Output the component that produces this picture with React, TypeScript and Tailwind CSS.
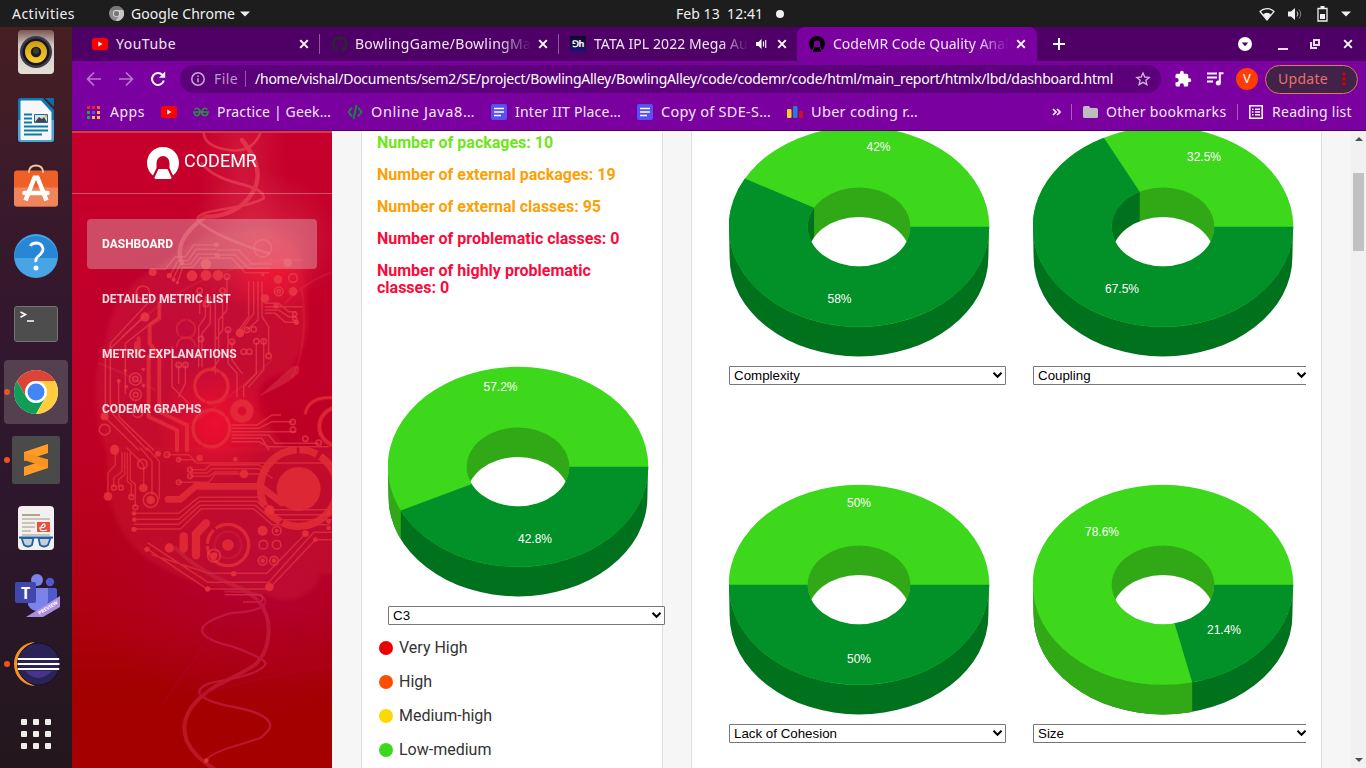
import type { ReactNode } from 'react';

type Slice = { text: string; x: number; y: number };

const LIGHT = '#3dd71c';
const LIGHT_SIDE = '#31a816';
const DARK = '#029028';
const DARK_SIDE = '#00711d';

/* ---------- 3D donut chart ---------- */

function Donut({ id, share, labels }: { id: string; share: number; labels: Slice[] }) {
  const cx = 130;
  const cy = 100.8;
  const a = share * 2 * Math.PI;
  const ox = cx + 130.3 * Math.cos(a);
  const oy = cy + 100 * Math.sin(a);
  const ix = cx + 51.3 * Math.cos(a);
  const iy = cy + 39.4 * Math.sin(a);
  const big = share > 0.5 ? 1 : 0;
  const front = share < 0.5;
  return (
    <svg width="262" height="232" viewBox="0 0 262 232" className="block shrink-0">
      <defs>
        <clipPath id={id + 'in'}>
          <ellipse cx={cx} cy={cy} rx="51.3" ry="39.4" />
        </clipPath>
        <clipPath id={id + 'side'}>
          <rect x="-1" y="90" width={ox + 1} height="142" />
        </clipPath>
      </defs>
      <path d="M0 100.8 L0.6 131.2 A129.4 99.2 0 0 0 259.4 131.2 L260 100.8Z" fill={DARK_SIDE} />
      {front && (
        <path
          d="M0 100.8 L0.6 131.2 A129.4 99.2 0 0 0 259.4 131.2 L260 100.8Z"
          fill={LIGHT_SIDE}
          clipPath={`url(#${id}side)`}
        />
      )}
      <ellipse cx={cx} cy={cy} rx="130.3" ry="100" fill={LIGHT} />
      <path
        d={`M${cx + 130.3} ${cy} A130.3 100 0 ${big} 1 ${ox} ${oy} L${ix} ${iy} A51.3 39.4 0 ${big} 0 ${cx + 51.3} ${cy}Z`}
        fill={DARK}
      />
      <g clipPath={`url(#${id}in)`}>
        <rect x="70" y="50" width="120" height="100" fill={LIGHT_SIDE} />
        {!front && share > 0.5 && <rect x="70" y="50" width={ix - 70} height="100" fill={DARK_SIDE} />}
        <ellipse cx={cx} cy={cy + 29.5} rx="51.3" ry="39.4" fill="#fff" />
      </g>
      {labels.map((l) => (
        <text
          key={l.text + l.y}
          x={l.x}
          y={l.y}
          textAnchor="middle"
          fill="#fff"
          fontSize="12"
          fontFamily="'Liberation Sans', Arial, sans-serif"
        >
          {l.text}
        </text>
      ))}
    </svg>
  );
}

function Select({ label }: { label: string }) {
  return (
    <div className="flex h-[19px] w-[277px] shrink-0 items-center justify-between rounded-[1px] border border-[#767676] bg-white pr-[2px] pl-1 font-['Liberation_Sans',Arial,sans-serif] text-[13.333px] leading-[17px] text-black">
      <span>{label}</span>
      <svg width="11" height="8" viewBox="0 0 11 8" fill="none" stroke="#000" strokeWidth="2" className="-mt-px">
        <path d="M1.500 1.800l4 4 4-4" />
      </svg>
    </div>
  );
}

function Chart({ id, share, label, labels }: { id: string; share: number; label: string; labels: Slice[] }) {
  return (
    <div className="flex h-[358px] w-[304px] shrink-0 flex-col">
      <Donut id={id} share={share} labels={labels} />
      <div className="h-[8px]" />
      <Select label={label} />
    </div>
  );
}

/* ---------- Desktop top bar ---------- */

function TopBar() {
  return (
    <header className="flex h-[27px] shrink-0 items-center bg-[#1d1d1d] text-[14px] whitespace-pre text-[#f0f0f0]">
      <span className="ml-3 w-[97px] tracking-[0.47px]">Activities</span>
      <svg width="15" height="15" viewBox="0 0 16 16">
        <circle cx="8" cy="8" r="8" fill="#8b8b8b" />
        <path d="M8 4h7a8 8 0 0 1-8 12l4-6z" fill="#c4c4c4" />
        <path d="M1 4a8 8 0 0 1 14 0H8z" fill="#777" />
        <circle cx="8" cy="8" r="3.8" fill="#ddd" />
        <circle cx="8" cy="8" r="2.8" fill="#777" />
      </svg>
      <span className="ml-[7px] w-[109px] tracking-[0.05px]">Google Chrome</span>
      <svg width="10" height="6" viewBox="0 0 10 6" fill="#f0f0f0"><path d="M0 0.5h10L5 5.5z" /></svg>
      <span className="ml-[426px] w-[100px] tracking-[0.05px]">Feb 13  12:41</span>
      <i className="h-2 w-2 rounded-full bg-[#f0f0f0]" />
      <svg className="ml-[475px]" width="16" height="14" viewBox="0 0 16 14">
        <path d="M1 4.5a10 10 0 0 1 14 0L8 13z" fill="none" stroke="#f0f0f0" strokeWidth="1.2" strokeLinejoin="round" />
        <path d="M4 7.2a6 6 0 0 1 8 0L8 13z" fill="#f0f0f0" />
      </svg>
      <svg className="ml-[13px]" width="16" height="14" viewBox="0 0 16 14">
        <path d="M0 4.5h3L7 1v12L3 9.5H0z" fill="#f0f0f0" />
        <path d="M9 4.500Q10.800 7 9 9.500" fill="none" stroke="#d0d0d0" />
        <path d="M11 2.500Q14.500 7 11 11.500" fill="none" stroke="#808080" />
      </svg>
      <svg className="ml-[13px]" width="11" height="16" viewBox="0 0 11 16">
        <path d="M1 2.500h9v12.500H1z" fill="none" stroke="#f0f0f0" strokeWidth="1.300" />
        <path d="M3.500 0h4v2h-4zM3 8h5v5H3z" fill="#f0f0f0" />
      </svg>
      <svg className="ml-[13px]" width="10" height="6" viewBox="0 0 10 6" fill="#f0f0f0"><path d="M0 0.500h10L5 5.500z" /></svg>
    </header>
  );
}

/* ---------- Dock ---------- */

function DockItem({ children, dot, active }: { children: ReactNode; dot?: boolean; active?: boolean }) {
  return (
    <div className="relative flex h-[68px] w-[72px] shrink-0 items-center justify-center">
      {active && <i className="absolute inset-x-1 inset-y-[2px] rounded-[4px] bg-[#54404f]" />}
      {dot && <i className="absolute top-1/2 left-1 h-[6px] w-[6px] -translate-y-1/2 rounded-full bg-[#e95420]" />}
      <svg width="48" height="48" viewBox="0 0 48 48" className="relative">{children}</svg>
    </div>
  );
}

function Dock() {
  return (
    <nav className="flex w-[72px] shrink-0 flex-col overflow-hidden bg-[linear-gradient(180deg,#471f22_0%,#3b1a2a_20%,#32172e_42%,#2c172b_70%,#23171c_100%)]">
      <svg width="72" height="59" viewBox="0 0 72 59" className="shrink-0">
        <defs>
          <linearGradient id="spk" x1="0" y1="0" x2="0" y2="1"><stop offset="0" stopColor="#7a5656" /><stop offset=".35" stopColor="#d2cac2" /><stop offset="1" stopColor="#e4e0d6" /></linearGradient>
          <linearGradient id="cone" x1="0" y1="0" x2="0" y2="1"><stop offset="0" stopColor="#d09c10" /><stop offset="1" stopColor="#fbd030" /></linearGradient>
        </defs>
        <rect x="18" y="3" width="36" height="44" rx="4" fill="url(#spk)" />
        <circle cx="36" cy="25" r="16" fill="#3c3a48" />
        <circle cx="36" cy="25" r="13.500" fill="#17151f" />
        <circle cx="36" cy="25" r="11" fill="url(#cone)" />
        <circle cx="36" cy="25" r="5.200" fill="#1b1b1b" />
        <circle cx="36" cy="24" r="3" fill="#3b3b3b" />
      </svg>
      <DockItem>
        <path d="M9 2h22l11 12v29a3 3 0 0 1-3 3H9a3 3 0 0 1-3-3V5a3 3 0 0 1 3-3z" fill="#0e7ab4" />
        <path d="M6 24h36v19a3 3 0 0 1-3 3H9a3 3 0 0 1-3-3z" fill="#4ba5d6" />
        <path d="M9.500 4.500H29L39.500 16v27a1 1 0 0 1-1 1h-29a1 1 0 0 1-1-1v-37a1 1 0 0 1 1-1.500z" fill="#f7f7f7" />
        <path d="M33 2h8q1 0 1 1v8z" fill="#0e6ca0" />
        <path d="M12 18.500h8M12 22.500h8M12 26.500h8M12 30.500h24M12 34.500h24M12 38.500h18" stroke="#0e7ab4" strokeWidth="1.800" />
        <path d="M22.500 18.500h13v8h-13z" fill="#cfe4ef" stroke="#246a90" strokeWidth="1" />
        <path d="M23 26l4-5 3 2 2-2 3 5z" fill="#444" />
        <circle cx="34" cy="20" r="1.200" fill="#f5b81a" />
      </DockItem>
      <DockItem>
        <g transform="translate(0 -1.500)">
          <path d="M2 11a3 3 0 0 1 3-3h38a3 3 0 0 1 3 3v30a3 3 0 0 1-3 3H5a3 3 0 0 1-3-3z" fill="#ee6028" />
          <path d="M2 25h44v16a3 3 0 0 1-3 3H5a3 3 0 0 1-3-3z" fill="#f0845a" />
          <path d="M17 10.500v-2q1-5.500 7-5.500t7 5.500v2" fill="none" stroke="#f2c89b" strokeWidth="1.800" />
          <path d="M22.500 15L13.500 38M25.500 15l9 23" stroke="#fff" strokeWidth="4.500" fill="none" />
          <path d="M21 13h6l1 4h-8z" fill="#fff" />
          <path d="M12.500 30.500h23" stroke="#fff" strokeWidth="4.500" strokeLinecap="round" />
        </g>
      </DockItem>
      <DockItem>
        <circle cx="24" cy="24" r="22" fill="#47a5e6" />
        <path d="M2 26a22 22 0 0 1 44 0z" fill="#2787d6" />
        <path d="M18.500 14q1-3 6-3t6.500 5.500q0 4-4 7T24 30" fill="none" stroke="#fff" strokeWidth="2.800" />
        <circle cx="24" cy="36" r="2.500" fill="#fff" />
      </DockItem>
      <DockItem>
        <rect x="2.500" y="6.500" width="43" height="35" rx="2.500" fill="#4d4d4d" stroke="#747474" />
        <path d="M8.500 12l5 2.500-5 2.800M15 21h7" fill="none" stroke="#fff" strokeWidth="1.600" />
      </DockItem>
      <DockItem dot active>
        <circle cx="24" cy="24" r="22" fill="#fff" />
        <path d="M4.950 13A22 22 0 0 1 43.050 13H24a11 11 0 0 0-9.530 16.500z" fill="#dc4437" />
        <path d="M4.950 13A22 22 0 0 0 24 46l9.530-16.500a11 11 0 0 1-19.060 0z" fill="#0f9d58" />
        <path d="M43.050 13A22 22 0 0 1 24 46l9.530-16.500A11 11 0 0 0 33.500 18.500 11 11 0 0 0 24 13z" fill="#ffcd40" />
        <circle cx="24" cy="24" r="10.500" fill="#fff" />
        <circle cx="24" cy="24" r="8.500" fill="#4285f4" />
      </DockItem>
      <DockItem dot>
        <rect x="0" y="0" width="48" height="48" rx="2" fill="#4a4a4a" />
        <path d="M12 16l24-8v9l-24 8z" fill="#ff9b26" />
        <path d="M12 31l24-8v9l-24 8z" fill="#ff9b26" />
        <path d="M12 16.500v7.500l24 8v-8.500z" fill="#f8931f" />
      </DockItem>
      <DockItem>
        <rect x="6" y="2" width="36" height="44" rx="4" fill="#f2f1ef" />
        <path d="M10 11h18" stroke="#b0a48f" strokeWidth="2" />
        <path d="M10 15h28M10 19h13M10 23h13M10 27h9M10 31h28" stroke="#c8c4b8" strokeWidth="1.800" />
        <rect x="25" y="18" width="13" height="10" fill="#e8503c" />
        <path d="M27 24q7 0 6-3t-4 2 6 3" fill="none" stroke="#fff" strokeWidth="1.200" />
        <g fill="#c9d1d8" stroke="#1c61a8" strokeWidth="1.800"><path d="M9.500 34h12l-1.500 7q-4 3-8 0zM26.500 34h12l-2.500 7q-4 3-8 0z" /><path d="M7 33.500h34" /></g>
      </DockItem>
      <DockItem>
        <g transform="translate(0 2)">
          <circle cx="25" cy="6" r="6" fill="#7b83eb" />
          <circle cx="38" cy="8" r="4.200" fill="#5059c9" />
          <path d="M34 14h9a2 2 0 0 1 2 2v9a8 8 0 0 1-11 7z" fill="#5059c9" />
          <path d="M17 14h19v13a10.500 10.500 0 0 1-20 4z" fill="#7b83eb" />
          <rect x="3" y="8" width="21" height="21" rx="2" fill="#4047ad" />
          <text x="13.500" y="25" textAnchor="middle" fill="#fff" fontSize="16" fontWeight="700" fontFamily="'Noto Sans',sans-serif">T</text>
          <path d="M14 43L48 22v11L31 43z" fill="#ad8ddf" />
          <text transform="translate(27.500 41) rotate(-32)" fill="#fff" fontSize="5" fontWeight="700" fontFamily="'Noto Sans',sans-serif">PREVIEW</text>
        </g>
      </DockItem>
      <DockItem dot>
        <path d="M23 2A21 22 0 0 0 23 46 24 24 0 0 1 23 2z" fill="#f7941e" />
        <circle cx="26.500" cy="24" r="21" fill="#2b2255" stroke="#15102c" />
        <path d="M13 31q13 14 27 0z" fill="#48348c" />
        <path d="M5.800 19h41.400M5.500 24h42M5.800 29h41.400" stroke="#fff" strokeWidth="2.200" />
      </DockItem>
      <div className="grid h-[72px] shrink-0 grid-cols-[repeat(3,6px)] content-center justify-center gap-[6px]">
        {Array.from({ length: 9 }, (_, i) => <i key={i} className="h-[6px] w-[6px] rounded-[1px] bg-[#f0f0ea]" />)}
      </div>
    </nav>
  );
}

/* ---------- Browser chrome ---------- */

function Close() {
  return <svg width="10" height="10" viewBox="0 0 10 10" className="shrink-0" stroke="#fff" strokeWidth="1.900"><path d="M1.200 1.200l7.600 7.600M8.800 1.200L1.200 8.800" /></svg>;
}

function YouTube() {
  return <svg width="16" height="12" viewBox="0 0 16 12" className="shrink-0"><rect width="16" height="12" rx="2.500" fill="#f00" /><path d="M6.300 3.500v5l4.200-2.500z" fill="#fff" /></svg>;
}

function CodeMrMark({ size, fill }: { size: number; fill: string }) {
  return (
    <svg width={size} height={size} viewBox="0 0 32 32" fill={fill} className="shrink-0">
      <path d="M6 28.500A16 16 0 1 1 26 28.500L22.500 21V16a6.500 7 0 0 0-13 0v5z" />
      <path d="M11.500 22h9l4 8.500q0 1.500-1.500 1.500H9q-1.500 0-1.500-1.500z" />
    </svg>
  );
}

const tabTitle = '-mt-[2px] overflow-hidden whitespace-nowrap [mask-image:linear-gradient(90deg,#000_82%,transparent)]';

function TabStrip() {
  return (
    <div className="flex h-[34px] shrink-0 items-center bg-[#4f0066] text-[14px] text-[#f0e6f4]">
      <div className="flex w-[247px] items-center pl-5">
        <YouTube />
        <span className="-mt-[2px] ml-2 w-[183px] tracking-[0.49px]">YouTube</span>
        <Close />
      </div>
      <i className="h-5 w-px bg-[#8a5a9a]" />
      <div className="flex w-[238px] items-center pl-[12px]">
        <svg width="16" height="16" viewBox="0 0 16 16" fill="#2b2536" className="shrink-0"><path fillRule="evenodd" d="M8 0C3.600 0 0 3.600 0 8c0 3.500 2.300 6.500 5.500 7.600.4.100.5-.2.500-.4v-1.500c-2.200.5-2.700-.9-2.700-.9-.4-.9-.9-1.200-.9-1.200-.7-.5.100-.5.100-.5.800.1 1.200.8 1.200.8.7 1.200 1.900.9 2.300.7.100-.5.300-.9.500-1.100-1.800-.2-3.600-.9-3.600-4 0-.9.300-1.600.8-2.100-.1-.2-.4-1 .1-2.100 0 0 .7-.2 2.200.8.600-.2 1.300-.3 2-.3s1.400.1 2 .3c1.500-1 2.200-.8 2.200-.8.400 1.100.2 1.900.1 2.100.5.600.8 1.300.8 2.100 0 3.100-1.900 3.700-3.700 3.900.3.300.6.800.6 1.500v2.200c0 .2.100.5.600.4A8 8 0 0 0 16 8c0-4.400-3.600-8-8-8z" /></svg>
        <span className={'ml-[7px] w-[176px] tracking-[0.27px] ' + tabTitle}>BowlingGame/BowlingMain</span>
        <span className="ml-[7px]"><Close /></span>
      </div>
      <i className="h-5 w-px bg-[#8a5a9a]" />
      <div className="flex w-[238px] items-center pl-[11px]">
        <span className="flex h-4 w-4 items-center justify-center bg-[linear-gradient(#0b0b22,#20107a)] text-[9px] font-bold tracking-[-0.5px] text-white">ꓨh</span>
        <span className={'ml-2 w-[154px] tracking-[0.07px] ' + tabTitle}>TATA IPL 2022 Mega Auction</span>
        <svg className="ml-[8px] shrink-0" width="11" height="12" viewBox="0 0 11 12"><path d="M0 4h2.500L5.500 1v10L2.500 8H0z" fill="#fff" /><path d="M7.500 3.500v5M9.700 2v8" stroke="#fff" strokeWidth="1.100" /></svg>
        <span className="ml-[10px]"><Close /></span>
      </div>
      <div className="flex h-full w-[240px] items-center rounded-t-lg bg-[#7a00a0] pl-3">
        <CodeMrMark size={16} fill="#000" />
        <span className={'ml-2 w-[176px] tracking-[-0.01px] ' + tabTitle}>CodeMR Code Quality Analysis</span>
        <span className="ml-[7px]"><Close /></span>
      </div>
      <svg className="ml-[16px]" width="12" height="12" viewBox="0 0 12 12" stroke="#fff" strokeWidth="2"><path d="M6 0v12M0 6h12" /></svg>
      <svg className="ml-[173px]" width="14" height="14" viewBox="0 0 14 14"><circle cx="7" cy="7" r="7" fill="#fff" /><path d="M3.800 5.500h6.400L7 9.200z" fill="#4f0066" /></svg>
      <i className="mt-[9px] ml-[26px] h-[2px] w-[10px] bg-[#e8dcec]" />
      <svg className="ml-[22px]" width="10" height="10" viewBox="0 0 10 10" fill="none" stroke="#e8dcec" strokeWidth="2"><path d="M4 1h5v5H4zM1 3v6h6" /></svg>
      <span className="ml-[23px]"><Close /></span>
    </div>
  );
}

function Toolbar() {
  return (
    <div className="flex h-[36px] shrink-0 items-center bg-[#7a00a0] text-[14px] text-white">
      <svg className="ml-[14px] shrink-0" width="16" height="16" viewBox="0 0 16 16" fill="none" stroke="#b877cc" strokeWidth="1.700"><path d="M15 8H2M8 1.500L1.500 8 8 14.500" /></svg>
      <svg className="ml-4 shrink-0" width="16" height="16" viewBox="0 0 16 16" fill="none" stroke="#b877cc" strokeWidth="1.700"><path d="M1 8h13M8 1.500L14.500 8 8 14.500" /></svg>
      <svg className="ml-4 shrink-0" width="16" height="16" viewBox="0 0 16 16" fill="none" stroke="#fff" strokeWidth="2"><path d="M13.800 9.500A6 6 0 1 1 12.500 4" /><path d="M9 6.800h6.200V.6z" fill="#fff" stroke="none" /></svg>
      <div className="ml-[14px] flex h-7 w-[981px] shrink-0 items-center rounded-full bg-[#5b007a]">
        <svg className="ml-[11px] shrink-0" width="14" height="14" viewBox="0 0 14 14" fill="none" stroke="#c8a8d4" strokeWidth="1.500"><circle cx="7" cy="7" r="6.200" /><path d="M7 6.200v4M7 3.500v1.500" /></svg>
        <span className="-mt-px ml-[9px] w-[24px] tracking-[0.4px] text-[#b99ac6]">File</span>
        <i className="ml-[7px] h-4 w-px bg-[#9458a8]" />
        <span className="-mt-px ml-[9px] w-[878px] shrink-0 text-[14px] tracking-[-0.241px] whitespace-nowrap">/home/vishal/Documents/sem2/SE/project/BowlingAlley/BowlingAlley/code/codemr/code/html/main_report/htmlx/lbd/dashboard.html</span>
        <svg className="ml-[2px] shrink-0" width="16" height="16" viewBox="0 0 24 24" fill="none" stroke="#d0b4da" strokeWidth="2"><path d="M12 3l2.700 6 6.600.6-5 4.400 1.500 6.500-5.800-3.500-5.800 3.500 1.500-6.500-5-4.400 6.600-.6z" /></svg>
      </div>
      <svg className="ml-[13px] shrink-0" width="18" height="18" viewBox="0 0 24 24" fill="#fff"><path d="M20.500 11H19V7a2 2 0 0 0-2-2h-4V3.500a2.500 2.500 0 0 0-5 0V5H4a2 2 0 0 0-2 2v3.800h1.500a2.700 2.700 0 0 1 0 5.400H2V20a2 2 0 0 0 2 2h3.800v-1.500a2.700 2.700 0 0 1 5.400 0V22H17a2 2 0 0 0 2-2v-4h1.500a2.500 2.500 0 0 0 0-5z" /></svg>
      <svg className="ml-[14px] shrink-0" width="18" height="16" viewBox="0 0 18 16"><path d="M1 2.500h10M1 6.500h10M1 10.500h6M13.800 12V2.300h3.700" stroke="#fff" strokeWidth="2" fill="none" /><circle cx="12.300" cy="12" r="2.500" fill="#fff" /></svg>
      <span className="ml-[12px] flex h-[22px] w-[22px] shrink-0 items-center justify-center rounded-full bg-[#ff3d00] text-[13px]">V</span>
      <div className="ml-[7px] flex h-[29px] w-[93px] shrink-0 items-center rounded-full border border-[#d87a5c] bg-[#43224a] pl-[12px]">
        <span className="-mt-px w-[64px] tracking-[0.29px] text-[#e8716d]">Update</span>
        <svg width="4" height="14" viewBox="0 0 4 14" fill="#d80000"><path d="M.5.500h3v3h-3zM.5 5.500h3v3h-3zM.5 10.500h3v3h-3z" /></svg>
      </div>
    </div>
  );
}

function DocIcon() {
  return <svg width="16" height="16" viewBox="0 0 16 16" className="shrink-0"><rect width="16" height="16" rx="2" fill="#5650f5" /><path d="M3 4.500h10M3 8h10M3 11.500h7" stroke="#fff" strokeWidth="1.700" /></svg>;
}

function Bookmarks() {
  const colors = ['#e22', '#e22', '#f53', '#1a5', '#55f', '#fb3', '#1a5', '#fb3', '#fb3'];
  return (
    <div className="flex h-[34px] shrink-0 items-center border-b border-[#4f0066] bg-[#7a00a0] pb-[3px] text-[14px] whitespace-nowrap text-[#f3e8f7] [&>span]:-mt-px">
      <div className="ml-[15px] grid grid-cols-[repeat(3,3px)] gap-[2px]">
        {colors.map((c, i) => <i key={i} className="h-[3px] w-[3px]" style={{ background: c }} />)}
      </div>
      <span className="ml-[10px] w-[51px] tracking-[0.53px]">Apps</span>
      <YouTube />
      <svg className="ml-4 shrink-0" width="16" height="10" viewBox="0 0 16 10" fill="none" stroke="#2f8d46" strokeWidth="1.700"><path d="M1.500 2.500Q4 0 6.200 2.500T5 8.500Q1.500 9.500 1 5h14Q14.500 9.500 11 8.500T9.800 2.500Q12 0 14.500 2.500" /></svg>
      <span className="ml-2 w-[130px] tracking-[0.16px]">Practice | Geek…</span>
      <svg width="16" height="14" viewBox="0 0 16 14" className="shrink-0" fill="none" stroke="#0f8a3c" strokeWidth="2"><path d="M5 2.500L1.500 7 5 11.500M11 2.500L14.500 7 11 11.500M9.500 0l-3 14" /></svg>
      <span className="ml-2 w-[120px] text-[14.5px] tracking-[0.61px]">Online Java8…</span>
      <DocIcon />
      <span className="ml-2 w-[122px] tracking-[0.23px]">Inter IIT Place…</span>
      <DocIcon />
      <span className="ml-2 w-[126px] text-[14.5px] tracking-[0.29px]">Copy of SDE-S…</span>
      <svg width="16" height="14" viewBox="0 0 16 14" className="shrink-0"><rect y="4" width="4.500" height="9" rx="1" fill="#f5d327" /><rect x="6" y="1" width="4.500" height="12" rx="1" fill="#2a7bd4" /><rect x="12" y="6" width="4" height="7" rx="1" fill="#c4161c" /></svg>
      <span className="ml-2 w-[241px] text-[14.5px] tracking-[0.31px]">Uber coding r…</span>
      <svg width="9" height="8" viewBox="0 0 9 8" fill="none" stroke="#fff" strokeWidth="1.600"><path d="M1 1l3 3-3 3M5 1l3 3-3 3" /></svg>
      <i className="ml-[10px] h-4 w-px bg-[#a860bd]" />
      <svg className="ml-[11px] shrink-0" width="15" height="12" viewBox="0 0 15 12" fill="#bdbdbd"><path d="M0 1.500Q0 0 1.500 0H6l1.500 2h6Q15 2 15 3.500v7q0 1.500-1.500 1.500h-12Q0 12 0 10.500z" /></svg>
      <span className="ml-[8px] w-[131px] tracking-[0.3px]">Other bookmarks</span>
      <i className="h-4 w-px bg-[#a860bd]" />
      <svg className="ml-[11px] shrink-0" width="14" height="14" viewBox="0 0 14 14" fill="none" stroke="#fff" strokeWidth="1.500"><path d="M.8.8h12.400v12.400H.8z" /><path d="M3 4.200h1.500M6 4.200h5M3 7h1.500M6 7h5M3 9.800h1.500M6 9.800h5" /></svg>
      <span className="ml-[9px] tracking-[0.28px]">Reading list</span>
    </div>
  );
}

/* ---------- Report sidebar ---------- */

function SidebarArt() {
  return (
    <svg className="absolute inset-0" width="260" height="637" viewBox="0 0 260 637">
      <defs>
        <linearGradient id="base" x1="0" y1="0" x2="0" y2="1"><stop offset="0" stopColor="#c6002c" /><stop offset=".5" stopColor="#be0024" /><stop offset=".75" stopColor="#b00012" /><stop offset=".88" stopColor="#a30000" /><stop offset="1" stopColor="#a60000" /></linearGradient>
        <radialGradient id="glow"><stop offset="0" stopColor="#ff1030" stopOpacity=".7" /><stop offset="1" stopColor="#ff1030" stopOpacity="0" /></radialGradient>
        <radialGradient id="plum"><stop offset="0" stopColor="#b4003c" stopOpacity=".75" /><stop offset="1" stopColor="#b4003c" stopOpacity="0" /></radialGradient>
        <radialGradient id="haze"><stop offset="0" stopColor="#f05868" stopOpacity=".42" /><stop offset="1" stopColor="#f05868" stopOpacity="0" /></radialGradient>
        <filter id="soft" x="-20%" y="-20%" width="140%" height="140%"><feGaussianBlur stdDeviation="6" /></filter>
      </defs>
      <rect width="260" height="637" fill="url(#base)" />
      <ellipse cx="190" cy="440" rx="180" ry="150" fill="url(#plum)" />
      <ellipse cx="110" cy="210" rx="120" ry="110" fill="url(#plum)" />
      <ellipse cx="190" cy="110" rx="80" ry="70" fill="url(#haze)" />
      <ellipse cx="170" cy="30" rx="45" ry="100" fill="url(#haze)" opacity=".6" />
      <g transform="translate(0 -1) scale(.33333)" fill="none" stroke="#ee4a52" strokeLinecap="round">
        <g fill="#f0474f" stroke="none" opacity=".17">
          <path d="M240 420Q330 350 420 310L560 300Q660 300 690 410Q720 520 700 640L650 730Q540 740 560 840L640 960H100Q40 760 100 640Q110 500 240 420z" filter="url(#soft)" />
        </g>
        <circle cx="600" cy="410" r="140" fill="url(#glow)" stroke="none" />
        <circle cx="430" cy="880" r="180" fill="url(#glow)" stroke="none" />
        <g strokeWidth="10" opacity=".55" stroke="#f0505e">
          <path d="M395 10Q400 50 470 60T565 10" strokeWidth="8" />
          <path d="M510 30Q585 120 540 190T400 260Q300 330 330 400" strokeWidth="13" />
          <path d="M390 100Q420 140 500 160T575 205Q540 225 440 240T400 290Q460 330 590 370" strokeWidth="8" />
        </g>
        <path d="M800 420Q700 450 640 520M690 480Q710 650 660 740M80 700Q140 720 250 780M360 880Q480 800 600 690M150 620Q400 380 690 390" strokeWidth="7" opacity=".18" />
        <path d="M560 800L660 710Q690 700 680 730Q650 760 560 800z" fill="#e84a58" stroke="none" opacity=".35" />
        <g strokeWidth="4.500" opacity=".55">
          <path d="M432 345H365L340 380H310L280 418H240M432 358H372L348 392H318L293 438M432 372H378L355 403H325L302 448M432 384H385L362 412H332L316 458M437 360H500L540 402H600M437 375H490L530 415H595M437 385H480L520 428H590M465 440V540L440 570V690L420 720M400 500V560L380 590V710M415 500V580L390 610V710M430 500V730M383 490V550M452 490V600L430 630M530 455V560L500 600M545 455V550L505 605M558 455V570L525 600M570 455V560L590 590V670M580 520H620L650 545H670M580 530H690M580 540H620L650 560H670M580 550H610L640 577H670M553 640V730L515 770V800M575 630V720L530 770M468 600V700L495 730V800M480 635V690L510 730M320 705V760M340 705V760L320 800M300 650V770L350 820" />
          <path d="M216 560L100 670V860M245 500L115 640V840M262 520V560L160 640V790M140 750V860L245 960M97 860L200 960M120 850L225 960" />
          <path d="M480 885H555L600 855H625M480 895H560L600 875H660M480 905H670M480 915H590L610 940H740M480 925H570L590 960M480 935H560L590 950H770" />
        </g>
        <g stroke="#e5303c" opacity=".8">
          <path d="M262 520V565L233 585V640L262 680V845L345 885V960M230 680V860L315 900V960" strokeWidth="12" />
          <path d="M200 625V680M192 640V665" strokeWidth="12" />
          <circle cx="418" cy="768" r="50" strokeWidth="10" strokeDasharray="90 10 60 8" />
          <circle cx="418" cy="895" r="55" strokeWidth="10" strokeDasharray="110 10 60 8" />
          <circle cx="342" cy="597" r="28" strokeWidth="6" strokeDasharray="60 8" opacity=".7" />
          <path d="M314 650a28 28 0 0 1 56 0" strokeWidth="6" opacity=".7" />
          <circle cx="510" cy="843" r="24" strokeWidth="22" />
          <circle cx="800" cy="890" r="58" strokeWidth="12" />
          <path d="M700 850Q710 800 780 803" strokeWidth="9" />
        </g>
        <g strokeWidth="5" opacity=".6">
          {[[213, 488, 20], [190, 747, 18], [190, 747, 8], [191, 794, 17], [191, 794, 7], [197, 846, 16], [98, 899, 16], [572, 355, 26], [663, 444, 13], [620, 484, 13], [620, 484, 5], [465, 440, 8], [383, 482, 8], [402, 522, 8], [452, 482, 8], [668, 552, 6], [668, 566, 6], [387, 627, 8], [468, 599, 8], [480, 635, 8], [525, 600, 8], [545, 598, 8], [553, 634, 8], [575, 634, 8], [590, 678, 8], [320, 705, 8], [340, 705, 8], [515, 665, 8], [532, 665, 8], [662, 876, 8], [663, 899, 8], [700, 926, 8], [740, 938, 8]].map(([x, y, r], i) => <circle key={i} cx={x} cy={y} r={r} />)}
        </g>
        <g fill="#ea3845" stroke="none">
          {[[242, 426, 12], [360, 437, 16], [402, 436, 16], [438, 436, 16], [402, 402, 16], [433, 344, 8], [436, 376, 8], [292, 437, 8], [305, 449, 6], [316, 458, 5], [219, 561, 14], [647, 398, 13], [618, 448, 13], [663, 484, 13], [579, 505, 13], [612, 527, 8], [504, 609, 13], [673, 577, 8], [160, 722, 5], [214, 718, 5], [140, 753, 6], [163, 770, 5], [214, 767, 5], [98, 859, 12], [128, 957, 13], [572, 433, 6]].map(([x, y, r], i) => <circle key={i} cx={x} cy={y} r={r} opacity=".85" />)}
        </g>
      </g>
      <g transform="translate(0 317) scale(.33333)" fill="none" stroke="#e83c45" strokeLinecap="round">
        <path d="M105 0Q90 220 210 320T580 440Q650 470 700 440T740 380H790V0z" fill="#ee444c" stroke="none" opacity=".17" filter="url(#soft)" />
        <g strokeWidth="4.500" opacity=".6">
          <path d="M130 10V50L108 75V140M150 15V70L125 90V115M158 15V80L140 95V115M166 15V100L178 110V145M175 15V95L190 110V175M165 0L215 50V110M205 0L240 40V140M225 0L262 40V150M285 20H350L375 45H780M320 35H360L375 45M355 65H400L415 50H560L590 70M355 75H405L420 62H560L600 90M355 85H410L430 72H500M320 103H410L430 78H560M187 196H320L380 148H560L600 185H780M187 214H320L382 160H555L600 200H780M187 229H320L384 172H550L600 215H780M187 243H325L388 182H545L600 230H770M225 303L405 423H590L730 275H780M228 285L408 403H590L725 253H780M240 320L410 376H585L700 258M460 440H565Q580 450 565 462H515" />
        </g>
        <g stroke="#e02b37" opacity=".9">
          <path d="M288 154H325L370 115H565L630 165" strokeWidth="20" />
          <path d="M335 265V302M372 322V258L402 226" strokeWidth="25" />
          <circle cx="680" cy="120" r="115" strokeWidth="22" strokeDasharray="230 8 55 12" strokeLinecap="butt" />
          <circle cx="680" cy="123" r="66" fill="#e02b37" stroke="none" />
          <circle cx="468" cy="291" r="62" strokeWidth="10" strokeDasharray="190 8 45 8" strokeLinecap="butt" />
          <circle cx="468" cy="291" r="17" fill="#e02b37" />
          <circle cx="468" cy="291" r="40" strokeWidth="7" opacity=".35" />
        </g>
        <g strokeWidth="5" opacity=".7">
          {[[211, 48, 14], [236, 156, 22], [426, 323, 19], [574, 290, 13], [614, 290, 13], [572, 338, 13], [606, 338, 13], [614, 248, 13], [285, 20, 8], [320, 35, 6], [354, 65, 7], [354, 85, 7], [320, 103, 7], [126, 119, 7], [147, 119, 7], [178, 147, 7], [190, 178, 7]].map(([x, y, r], i) => <circle key={i} cx={x} cy={y} r={r} />)}
        </g>
        <g fill="#e5303c" stroke="none">
          {[[128, 8, 13], [258, 17, 9], [383, 30, 10], [490, 34, 7], [516, 78, 13], [214, 120, 13], [108, 145, 13], [236, 156, 13], [186, 196, 7], [187, 215, 7], [186, 244, 8], [225, 304, 8], [292, 300, 14], [426, 323, 10], [572, 248, 15], [614, 248, 6], [572, 338, 7], [606, 338, 7], [485, 377, 8], [407, 423, 8], [592, 417, 13], [700, 257, 10], [730, 275, 7], [593, 187, 15], [770, 197, 7], [770, 220, 7], [770, 240, 7]].map(([x, y, r], i) => <circle key={i} cx={x} cy={y} r={r} opacity=".9" />)}
        </g>
        <g opacity=".55">
          <path d="M310 300Q380 370 480 410Q590 450 590 545Q590 610 550 650Q520 670 430 715Q310 790 345 880Q370 930 430 965" stroke="#cc2846" strokeWidth="12" />
          <path d="M460 430Q580 430 580 460T480 495Q390 520 390 548Q395 575 480 595Q590 635 580 650Q560 680 440 700Q380 710 382 735Q395 762 500 780Q595 800 595 835Q590 850 565 870Q520 885 470 900Q410 920 400 940" stroke="#cc2858" strokeWidth="7" />
          <path d="M330 430Q540 450 730 495M780 650Q550 690 380 740M440 530Q350 660 270 770" stroke="#c00050" strokeWidth="7" opacity=".35" />
        </g>
        <circle cx="403" cy="938" r="7" fill="#d83a30" stroke="none" />
      </g>
    </svg>
  );
}

function Sidebar() {
  return (
    <aside className="relative w-[260px] shrink-0 overflow-hidden font-['Roboto',sans-serif] text-white">
      <SidebarArt />
      <div className="relative">
        <div className="flex h-[63px] items-center justify-center gap-[5px] border-t-2 border-b border-t-[#e93248] border-b-[#ffffff4d] text-[18px] leading-[30px]">
          <CodeMrMark size={32} fill="#fff" />
          <span className="mt-[-5px]">CODEMR</span>
        </div>
        <ul className="flex flex-col gap-[5px] px-[15px] pt-[25px] text-[12px] leading-[30px] font-bold">
          <li className="flex h-[50px] items-center rounded-[4px] bg-[#e5d5d559] px-[15px]">DASHBOARD</li>
          <li className="flex h-[50px] items-center px-[15px] text-[#ffffffdb]">DETAILED METRIC LIST</li>
          <li className="flex h-[50px] items-center px-[15px] text-[#ffffffdb]">METRIC EXPLANATIONS</li>
          <li className="flex h-[50px] items-center px-[15px] text-[#ffffffdb]">CODEMR GRAPHS</li>
        </ul>
      </div>
    </aside>
  );
}

/* ---------- Report body ---------- */

const legend = [
  { name: 'Very High', dot: 'bg-[#eb0000]' },
  { name: 'High', dot: 'bg-[#ff4d00]' },
  { name: 'Medium-high', dot: 'bg-[#fcd900]' },
  { name: 'Low-medium', dot: 'bg-[#3dd71c]' },
];

function Report() {
  return (
    <main className="flex min-w-0 flex-1 bg-[#f6f6f6] pl-[29px] font-['Roboto',sans-serif]">
      <section className="flex w-[302px] shrink-0 flex-col border-x border-[#dfdfdf] bg-white">
        <div className="flex flex-col gap-[15px] pt-[3px] pl-[15px] text-[16px] leading-[17px] font-bold">
          <p className="text-[#6ee619]">Number of packages: 10</p>
          <p className="text-[#ff9f05]">Number of external packages: 19</p>
          <p className="text-[#ff9f05]">Number of external classes: 95</p>
          <p className="text-[#fb0a3b]">Number of problematic classes: 0</p>
          <p className="w-[240px] text-[#fb0a3b]">Number of highly problematic classes: 0</p>
        </div>
        <div className="mt-[70px] ml-[26px] h-[259px]">
          <Chart id="c3" share={0.428} label="C3" labels={[{ text: '57.2%', x: 112.5, y: 25 }, { text: '42.8%', x: 147, y: 177 }]} />
        </div>
        <ul className="mt-[6px] flex flex-col text-[16px] text-[#333]">
          {legend.map((l) => (
            <li key={l.name} className="flex h-[34px] shrink-0 items-center gap-[6px] pl-[17px]">
              <i className={'-mt-px h-[14px] w-[14px] rounded-full ' + l.dot} />
              {l.name}
            </li>
          ))}
        </ul>
      </section>
      <section className="ml-[28px] flex w-[631px] shrink-0 flex-col overflow-hidden border-x border-[#dfdfdf] bg-white">
        <div className="-mt-[5px] ml-[37px] flex w-[577px] flex-wrap overflow-hidden">
          <div className="flex">
            <Chart id="cx" share={0.58} label="Complexity" labels={[{ text: '42%', x: 149.5, y: 25 }, { text: '58%', x: 110.5, y: 177 }]} />
            <Chart id="cp" share={0.675} label="Coupling" labels={[{ text: '32.5%', x: 171, y: 35 }, { text: '67.5%', x: 89, y: 167 }]} />
          </div>
          <div className="flex">
            <Chart id="lc" share={0.5} label="Lack of Cohesion" labels={[{ text: '50%', x: 130, y: 23 }, { text: '50%', x: 130, y: 179 }]} />
            <Chart id="sz" share={0.214} label="Size" labels={[{ text: '78.6%', x: 69, y: 52 }, { text: '21.4%', x: 191, y: 150 }]} />
          </div>
        </div>
      </section>
    </main>
  );
}

function Scrollbar() {
  return (
    <div className="flex w-[15px] shrink-0 flex-col items-center bg-[#f1f1f1]">
      <svg className="mt-[6px]" width="8" height="4" viewBox="0 0 8 4" fill="#505050"><path d="M4 0l4 4H0z" /></svg>
      <i className="mt-[32px] h-[78px] w-[11px] bg-[#c1c1c1]" />
      <svg className="mt-auto mb-[6px]" width="8" height="4" viewBox="0 0 8 4" fill="#505050"><path d="M0 0h8L4 4z" /></svg>
    </div>
  );
}

export default function App() {
  return (
    <div className="flex h-[768px] w-[1366px] flex-col overflow-hidden bg-[#f6f6f6] font-['Noto_Sans',sans-serif]">
      <TopBar />
      <div className="flex min-h-0 flex-1">
        <Dock />
        <div className="flex min-w-0 flex-1 flex-col">
          <TabStrip />
          <Toolbar />
          <Bookmarks />
          <div className="flex min-h-0 flex-1 overflow-hidden">
            <Sidebar />
            <Report />
            <Scrollbar />
          </div>
        </div>
      </div>
    </div>
  );
}
